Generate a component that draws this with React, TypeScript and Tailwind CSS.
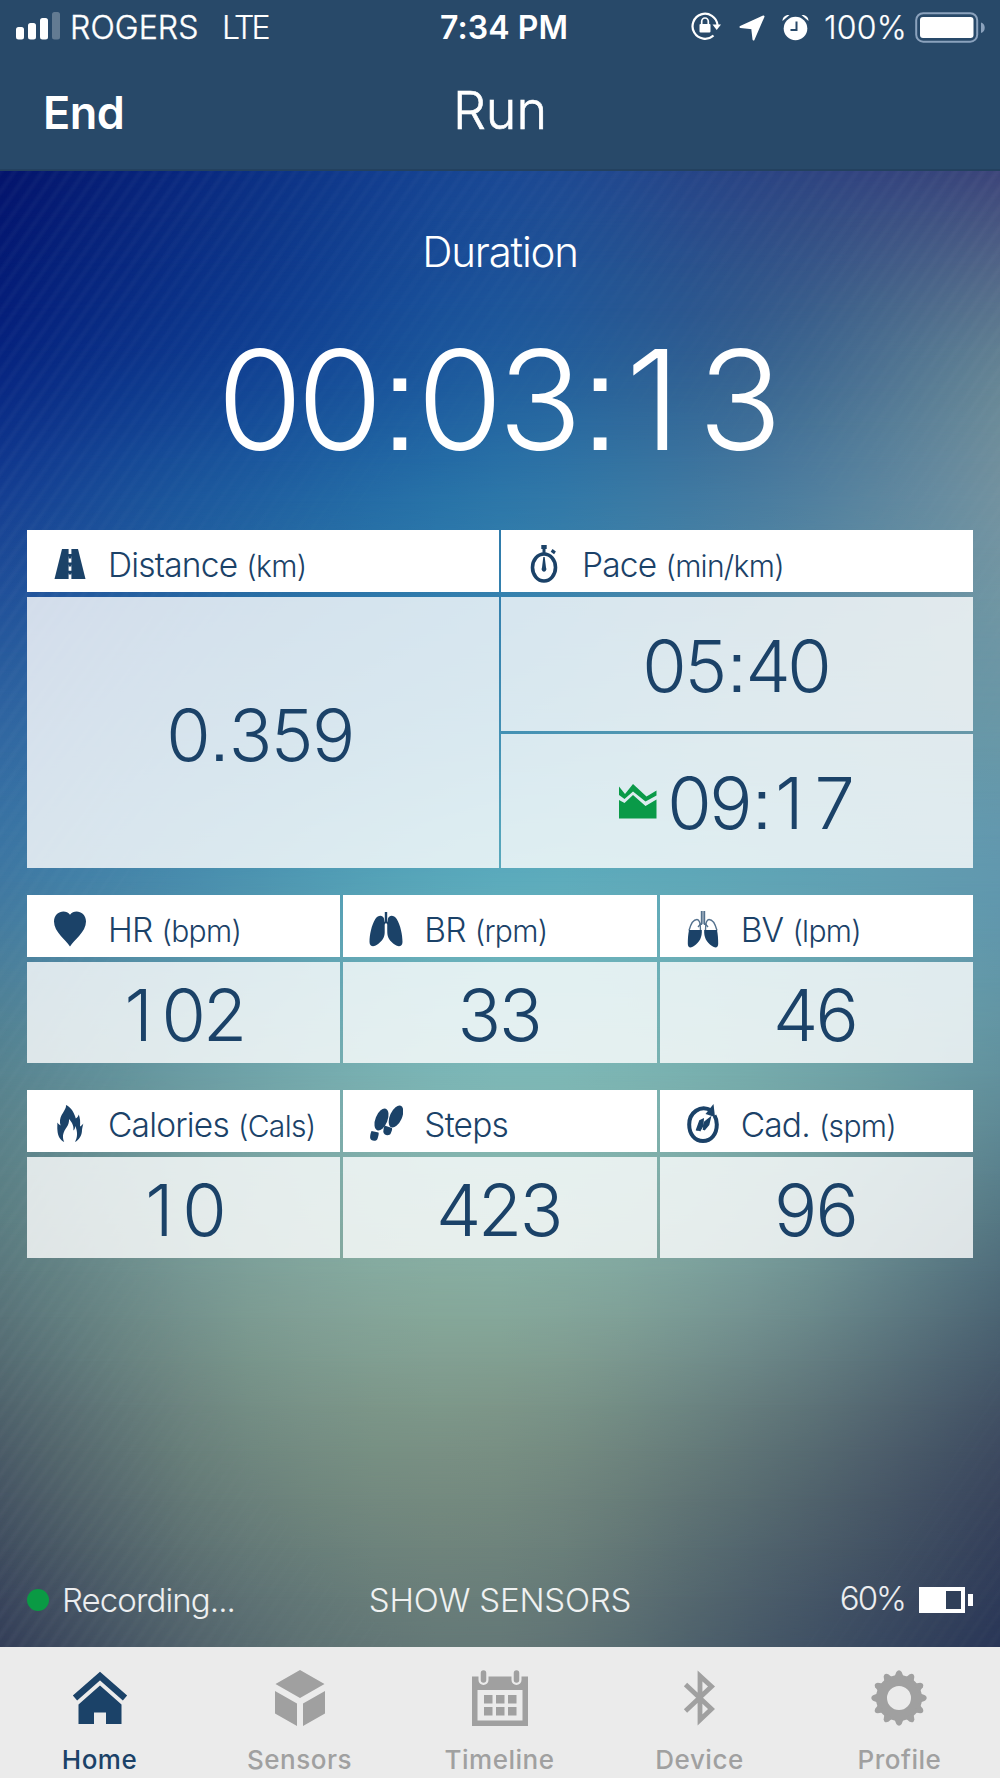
import React from 'react';

type Row = { y: number; colors: string[] };

/* Key colours of the backdrop, five per row from left to right. */
const BACKDROP: Row[] = [
  { y: 0, colors: ['#04146c', '#0b2f84', '#1a4894', '#2a4484', '#3c457a'] },
  { y: 180, colors: ['#06237f', '#103f91', '#1f5a9c', '#35608f', '#617f92'] },
  { y: 330, colors: ['#153f92', '#1f5fa0', '#2d77a9', '#487ca0', '#7292a0'] },
  { y: 530, colors: ['#2d62a0', '#357aa8', '#3f8cb2', '#5b95ab', '#6a97a6'] },
  { y: 710, colors: ['#3f78a2', '#4d94b0', '#5cabbc', '#60a5b6', '#6198ae'] },
  { y: 905, colors: ['#57838f', '#70a3a8', '#7db7b6', '#76abab', '#62919d'] },
  { y: 1100, colors: ['#5a787d', '#7d9f98', '#87ada1', '#779a98', '#506d7b'] },
  { y: 1280, colors: ['#4a5b67', '#6f877f', '#788f83', '#5e7376', '#3d4a60'] },
  { y: 1475, colors: ['#333e58', '#586b70', '#647877', '#475968', '#293657'] },
];

const rgb = (hex: string) => [1, 3, 5].map((i) => parseInt(hex.slice(i, i + 2), 16));

/* Catmull-Rom interpolation through evenly numbered samples. */
function smooth(values: number[], t: number) {
  const last = values.length - 1;
  const i = Math.min(Math.floor(t), last - 1);
  const f = t - i;
  const b = values[i];
  const c = values[i + 1];
  const a = i > 0 ? values[i - 1] : 2 * b - c;
  const d = i + 2 <= last ? values[i + 2] : 2 * c - b;
  return 0.5 * (2 * b + (c - a) * f + (2 * a - 5 * b + 4 * c - d) * f * f + (3 * b - a - 3 * c + d) * f * f * f);
}

const SUB = 4;
const wide = BACKDROP.map((row) => {
  const parsed = row.colors.map(rgb);
  return Array.from({ length: 4 * SUB + 1 }, (_, k) => [0, 1, 2].map((ch) => smooth(parsed.map((p) => p[ch]), k / SUB)));
});
const STRIPS = Array.from({ length: (BACKDROP.length - 1) * SUB + 1 }, (_, k) => {
  const t = k / SUB;
  const y = Math.round(smooth(BACKDROP.map((r) => r.y), t));
  const colors = wide[0].map((_, col) => {
    const c = [0, 1, 2].map((ch) => Math.round(Math.max(0, Math.min(255, smooth(wide.map((w) => w[col][ch]), t)))));
    return `rgb(${c.join(',')})`;
  });
  return { y, colors };
});

/* Each strip fades in over the one above it, which gives a smooth two-way blend. */
function Backdrop() {
  return (
    <div className="absolute inset-0 overflow-hidden" aria-hidden="true">
      {STRIPS.map((row, i) => {
        const top = i === 0 ? 0 : STRIPS[i - 1].y;
        const mask = i === 0 ? 'none' : `linear-gradient(to bottom, transparent 0, #000 ${row.y - top}px)`;
        return (
          <div
            key={row.y}
            className="absolute inset-x-0 bottom-0"
            style={{
              top,
              backgroundImage: `linear-gradient(to right, ${row.colors.join(', ')})`,
              maskImage: mask,
            }}
          />
        );
      })}
      <div className="absolute inset-0 bg-[repeating-linear-gradient(125deg,rgba(255,255,255,0.03)_0px,rgba(255,255,255,0.03)_1.5px,transparent_5px,transparent_8px,rgba(255,255,255,0.03)_11.5px)] [mask-image:radial-gradient(ellipse_at_60%_60%,transparent_45%,#000_85%)]" />
    </div>
  );
}

function Icon({ w, h, children, className = '' }: { w: number; h: number; children: React.ReactNode; className?: string }) {
  return (
    <svg width={w} height={h} viewBox={`0 0 ${w} ${h}`} fill="currentColor" className={`block shrink-0 ${className}`}>
      {children}
    </svg>
  );
}

const RoadIcon = () => (
  <Icon w={34} h={38}>
    <path d="M9 4H25L32.500 34H1.500Z" />
    <path d="M17 4V34" stroke="#fff" strokeWidth="2.800" strokeDasharray="6 2.400" strokeDashoffset="1" />
    <path d="M17 10.500v3M17 18.500v3M17 26.500v3" stroke="currentColor" strokeWidth="2.800" />
  </Icon>
);
const StopwatchIcon = () => (
  <Icon w={34} h={38}>
    <ellipse cx="17" cy="22.500" rx="11.500" ry="13.500" fill="none" stroke="currentColor" strokeWidth="3.600" />
    <path d="M14.300 0h5.400v4h-1.200v4h-3V4h-1.200z" />
    <path d="m25.500 4 3.400 2.400-1.800 2.800-3.400-2.400z" />
    <path d="M16.300 12h1.400l1.300 10.500a2.400 2.600 0 1 1-4 0z" />
  </Icon>
);
const HeartIcon = () => (
  <Icon w={34} h={38}>
    <path d="M17 36.500C13 30 1 22 1 11.500C1 1.500 12.500-1.500 17 4.800C21.500-1.500 33 1.500 33 11.500C33 22 21 30 17 36.500Z" />
  </Icon>
);
const LungsIcon = () => (
  <Icon w={34} h={38}>
    <path d="M15.800 2h2.400v9.500l3 3-1 1.500-3.200-3-3.200 3-1-1.500 3-3z" />
    <path d="M15 8.500C13.500 4.500 9 5 6.300 9 2.500 15 .5 25 .5 32c.1 5 4.500 5 7.500 2.800 5-3.600 7.700-7.300 7.700-12.300 0-4.500.3-10-.7-14Z" />
    <path d="M19 8.500c1.500-4 6-3.500 8.700.5 3.800 6 5.800 16 5.800 23-.1 5-4.500 5-7.500 2.800-5-3.600-7.700-7.300-7.700-12.300 0-4.500-.3-10 .7-14Z" />
  </Icon>
);
const LungsVolumeIcon = () => (
  <Icon w={34} h={40}>
    <g fill="none" stroke="currentColor" strokeWidth="1.400" opacity=".75">
      <path d="M15.500 2v14M18.500 2v14M15.500 14l-3.500 4M18.500 14l3.500 4" />
      <path d="M3 21.500C5 14 8 10.500 11 10.500c3 0 3.500 5 3.500 11M31 21.500C29 14 26 10.500 23 10.500c-3 0-3.500 5-3.500 11" />
    </g>
    <path d="M16.300 2h1.400v13h-1.400z" opacity=".6" />
    <path d="M3 21h12.800c.4 7-2 12-7.800 16-3 2.200-6.300 2.200-6.200-2.500 0-4.500.3-9 1.200-13.500ZM31 21H18.200c-.4 7 2 12 7.800 16 3 2.200 6.300 2.200 6.200-2.500 0-4.500-.3-9-1.200-13.500Z" />
  </Icon>
);
const FlameIcon = () => (
  <Icon w={34} h={40}>
    <path d="M13 1c.8 5-7 10-6 18l.6 2.500C6 20.500 5 19.500 4.300 18.500c.2 3-.2 5.500.2 8.500.3 5 2.800 9 6.700 11-2.700-6-.4-10.500 2.300-14.500 2-3 2.500-5 2.600-8.500 4 4.500 4.700 8 4.300 11.500 1.300-1 1.700-2.500 1.800-4.500 2.500 5.500 2.500 11-.2 16C26 36 29 31.500 29 26c.3-2.500 1-4.500 1.300-6.500-1 1.400-2 2.300-3.300 3 .4-4.500.2-8-1.200-12-.6 2-1.600 3.200-3 4C21.500 9.500 18.500 3.500 13 1Z" />
  </Icon>
);
const StepsIcon = () => (
  <Icon w={34} h={38}>
    <ellipse cx="12.500" cy="14.500" rx="6" ry="11.500" transform="rotate(22 12.500 14.500)" />
    <ellipse cx="27" cy="11.500" rx="6" ry="11.800" transform="rotate(24 27 11.500)" />
    <path d="m2.500 26 7 1.400c.7 1.500-.4 4-.9 6-.6 3.400-7.400 3-7.500-1 0-2.300.6-4.500 1.400-6.400ZM15.500 20.500l7.500 2.500c.5 2-.6 3.700-1.200 5.300-1.300 3.400-7.600 2.200-7.500-1.800.1-2 .5-4.200 1.200-6Z" />
  </Icon>
);
const CadenceIcon = () => (
  <Icon w={34} h={40}>
    <path d="M25.500 6.500C14 0 3.200 9 3.200 20.500 3.200 30.500 9 37 17 37s13.800-6.500 13.800-16.500c0-3.500-.8-6.500-2.300-9" fill="none" stroke="currentColor" strokeWidth="4" />
    <path d="M27.500 0 29 13 19.500 10z" />
    <path d="M10.500 26.500 14 17l3-1.500-.5 6.500-3 5M17.500 26l1.500-8 5-4-1.500 6.500-4.500 5.500" stroke="currentColor" strokeWidth="1.800" />
  </Icon>
);
const AreaChartIcon = () => (
  <Icon w={38} h={37} className="-mt-1 text-[#0a9a48]">
    <path d="M0 3.500 6 11 14 1 27.500 13.500 37.500 7.500V12.500L26.500 18.500 14 8.500 5.500 16 0 12Z" />
    <path d="M0 17 5.500 20 14 12 26.500 23 37.500 16.500V35.500H0Z" />
  </Icon>
);

type Metric = { label: string; unit?: string; value?: string; icon: React.ReactNode };

function CellHeader({ label, unit, icon }: Metric) {
  return (
    <div className="flex h-[62px] items-center bg-white pl-[26px] text-[#1b4268]">
      <div className="flex w-[34px] shrink-0 justify-center pt-[5px]">{icon}</div>
      <div className="ml-[21px] flex items-baseline pt-[9px] font-light leading-none whitespace-nowrap">
        <span className="text-[33.500px] tracking-[-0.800px]">{label}</span>
        {unit && <span className="ml-[9px] text-[30px] tracking-[-0.700px]">{unit}</span>}
      </div>
    </div>
  );
}

/* Figures share one advance width; punctuation takes half of it. */
function Figures({ children, className = '' }: { children: string; className?: string }) {
  return (
    <span className={`inline-flex font-light leading-none [font-feature-settings:'ss07','calt'_0] ${className}`}>
      {[...children].map((ch, i) => {
        const narrow = ch === ':' || ch === '.';
        return (
          <span key={i} className={`flex justify-center ${narrow ? 'w-[0.288em]' : 'w-[0.576em]'} ${ch === '1' ? 'pr-[0.1em]' : ''}`}>
            {ch}
          </span>
        );
      })}
    </span>
  );
}

const valueText = 'text-[72px] text-[#1b4268]';
const valueCell = 'flex items-center justify-center bg-white/80 pt-1';

function MetricRow({ items }: { items: Metric[] }) {
  return (
    <div className="grid grid-cols-3 gap-x-[3px]">
      {items.map((m) => (
        <div key={m.label} className="flex flex-col gap-[5px]">
          <CellHeader {...m} />
          <div className={`${valueCell} h-[101px]`}>
            <Figures className={valueText}>{m.value ?? ''}</Figures>
          </div>
        </div>
      ))}
    </div>
  );
}

function StatusBar() {
  return (
    <div className="flex h-[56px] items-center text-[32px] leading-none">
      <Icon w={46} h={28} className="ml-[15px] -mt-1">
        <rect x="1" y="15" width="8" height="12.500" rx="2.500" />
        <rect x="13" y="11" width="8" height="16.500" rx="2.500" />
        <rect x="25" y="6" width="8" height="21.500" rx="2.500" />
        <rect x="37" y="0" width="8" height="27.500" rx="2.500" opacity=".28" />
      </Icon>
      <span className="ml-[9px] w-[152px] font-light tracking-[0.100px] [-webkit-text-stroke:0.4px_currentColor]">ROGERS</span>
      <span className="w-[218px] font-light tracking-[-2.900px] [-webkit-text-stroke:0.2px_currentColor]">LTE</span>
      <span className="w-[251px] text-[32px] font-semibold tracking-[0.100px]">7:34 PM</span>
      <Icon w={31} h={30} className="-mt-1">
        <path d="M22.500 24.500A12.500 12.500 0 1 1 26.500 14" fill="none" stroke="currentColor" strokeWidth="2.200" />
        <path d="M21.500 13.500h8.500l-4.300 5.500z" />
        <rect x="8.500" y="13" width="11" height="8.500" rx="1" />
        <path d="M10.700 13v-2.500a3.300 3.500 0 0 1 6.600 0V13" fill="none" stroke="currentColor" strokeWidth="1.700" />
      </Icon>
      <Icon w={26} h={26} className="ml-[17px]">
        <path d="M24.500 1.500 14.500 24.500 13.200 13.200 1.500 12z" stroke="currentColor" strokeWidth="2" strokeLinejoin="round" />
      </Icon>
      <Icon w={27} h={27} className="ml-[17px] -mt-0.5">
        <circle cx="13.500" cy="14.500" r="11.800" />
        <path d="M.5 7C.5 3 3.500.5 7.500 1zM26.500 7C26.500 3 23.500.5 19.500 1z" />
        <path d="M14.500 7.500v8.500h-6" fill="none" stroke="#284969" strokeWidth="2" />
      </Icon>
      <span className="ml-[15px] w-[91px] font-light tracking-[0.200px] [-webkit-text-stroke:0.2px_currentColor]">100%</span>
      <Icon w={72} h={32}>
        <rect x="1.200" y="1.200" width="61" height="28.500" rx="7" fill="none" stroke="#8ba2bd" strokeWidth="2" />
        <rect x="5" y="5" width="53.500" height="21" rx="3" />
        <path d="M66 10.500c5 1 5 9.500 0 10.500z" fill="#8ba2bd" />
      </Icon>
    </div>
  );
}

const gearTeeth = Array.from({ length: 12 }, (_, i) => i * 30);

const TABS: { label: string; icon: React.ReactNode }[] = [
  {
    label: 'Home',
    icon: (
      <Icon w={56} h={56}>
        <path d="M3 28 28 6 53 28" fill="none" stroke="currentColor" strokeWidth="6.500" />
        <path d="M28 15.500 49.500 34.500V54H34V42.500H22V54H6.500V34.500Z" />
      </Icon>
    ),
  },
  {
    label: 'Sensors',
    icon: (
      <Icon w={56} h={56}>
        <path d="M28 0 52.500 14 28 28 3.500 14ZM3 21 25 33.500V56L3 43.500ZM53 21 31 33.500V56L53 43.500Z" />
      </Icon>
    ),
  },
  {
    label: 'Timeline',
    icon: (
      <Icon w={56} h={56}>
        <path d="M0 6.500H56V56H0ZM5.500 20V50.500H50.500V20Z" fillRule="evenodd" />
        <g fill="none" strokeLinecap="round">
          <path d="M11.500 4v6M44.500 4v6" stroke="#ebebeb" strokeWidth="10" />
          <path d="M11.500 3v7M44.500 3v7" stroke="currentColor" strokeWidth="5.500" />
        </g>
        <path d="M12 25h8.500v8.500H12zM24 25h8.500v8.500H24zM36 25h8.500v8.500H36zM12 37h8.500v8.500H12zM24 37h8.500v8.500H24zM36 37h8.500v8.500H36z" />
      </Icon>
    ),
  },
  {
    label: 'Device',
    icon: (
      <Icon w={56} h={56}>
        <path d="M13.500 14.500 39.500 39 28 50V6L39.500 16.500 13.500 41" fill="none" stroke="currentColor" strokeWidth="4.800" />
      </Icon>
    ),
  },
  {
    label: 'Profile',
    icon: (
      <Icon w={56} h={56} className="-ml-[2px]">
        <circle cx="28" cy="28" r="17.500" fill="none" stroke="currentColor" strokeWidth="11" />
        {gearTeeth.map((a) => (
          <path key={a} d="M23 8 25.300 2Q28-1.500 30.700 2L33 8Z" transform={`rotate(${a} 28 28)`} />
        ))}
      </Icon>
    ),
  },
];

export default function App() {
  return (
    <div className="flex h-[1778px] w-[1000px] flex-col overflow-hidden font-[Inter,'Liberation_Sans',sans-serif] text-white">
      <header className="h-[171px] shrink-0 border-b-2 border-[#23415f] bg-[#284969]">
        <StatusBar />
        <div className="grid grid-cols-3 leading-none">
          <span className="pt-[34px] pl-[43px] text-[45px] font-semibold tracking-[-0.500px]">End</span>
          <span className="pt-[29px] text-center text-[52px] font-light tracking-[0px] [-webkit-text-stroke:0.6px_currentColor]">Run</span>
        </div>
      </header>

      <main className="relative h-[1476px] shrink-0">
        <Backdrop />
        <div className="relative flex h-full flex-col px-[27px]">
          <div className="flex h-[359px] flex-col items-center leading-none">
            <h1 className="mt-[60px] text-[42px] font-light tracking-[-1.200px]">Duration</h1>
            <Figures className="mt-[57px] text-[139px]">00:03:13</Figures>
          </div>

          <div className="flex flex-col gap-[27px]">
            <div className="grid grid-cols-2 gap-x-[2px]">
              <div className="flex flex-col gap-[5px]">
                <CellHeader label="Distance" unit="(km)" icon={<RoadIcon />} />
                <div className={`${valueCell} h-[271px] pr-1`}>
                  <Figures className={valueText}>0.359</Figures>
                </div>
              </div>
              <div className="flex flex-col gap-[5px]">
                <CellHeader label="Pace" unit="(min/km)" icon={<StopwatchIcon />} />
                <div className="flex flex-col gap-[3px]">
                  <div className={`${valueCell} h-[134px]`}>
                    <Figures className={valueText}>05:40</Figures>
                  </div>
                  <div className={`${valueCell} h-[134px] gap-[12px]`}>
                    <AreaChartIcon />
                    <Figures className={valueText}>09:17</Figures>
                  </div>
                </div>
              </div>
            </div>
            <MetricRow
              items={[
                { label: 'HR', unit: '(bpm)', value: '102', icon: <HeartIcon /> },
                { label: 'BR', unit: '(rpm)', value: '33', icon: <LungsIcon /> },
                { label: 'BV', unit: '(lpm)', value: '46', icon: <LungsVolumeIcon /> },
              ]}
            />
            <MetricRow
              items={[
                { label: 'Calories', unit: '(Cals)', value: '10', icon: <FlameIcon /> },
                { label: 'Steps', value: '423', icon: <StepsIcon /> },
                { label: 'Cad.', unit: '(spm)', value: '96', icon: <CadenceIcon /> },
              ]}
            />
          </div>

          <footer className="mt-auto mb-[27px] grid h-[40px] grid-cols-3 items-center text-[33px] font-light leading-none tracking-[-0.900px] text-white/90">
            <div className="flex items-center">
              <span className="size-[22px] rounded-full bg-[#0a9a44]" />
              <span className="ml-[13px]">Recording...</span>
            </div>
            <span className="text-center whitespace-nowrap tracking-[-0.200px]">SHOW SENSORS</span>
            <div className="flex items-center justify-end">
              <span className="mr-[14px] -mt-1 tracking-[-2px]">60%</span>
              <Icon w={54} h={26} className="text-white">
                <path d="M0 0H46V26H0ZM27 4V22H42V4Z" fillRule="evenodd" />
                <path d="M27 4H42V22H27Z" fill="#2f3f59" />
                <path d="M49 7h5v12h-5z" />
              </Icon>
            </div>
          </footer>
        </div>
      </main>

      <nav className="grid h-[131px] shrink-0 grid-cols-5 bg-[#ebebeb]">
        {TABS.map((t, i) => (
          <div key={t.label} className={`flex flex-col items-center pt-[23px] ${i === 0 ? 'text-[#1b4268]' : 'text-[#a0a0a0]'}`}>
            {t.icon}
            <span className="mt-[21px] -ml-[1px] text-[26px] font-medium leading-none tracking-[0.500px]">{t.label}</span>
          </div>
        ))}
      </nav>
    </div>
  );
}
